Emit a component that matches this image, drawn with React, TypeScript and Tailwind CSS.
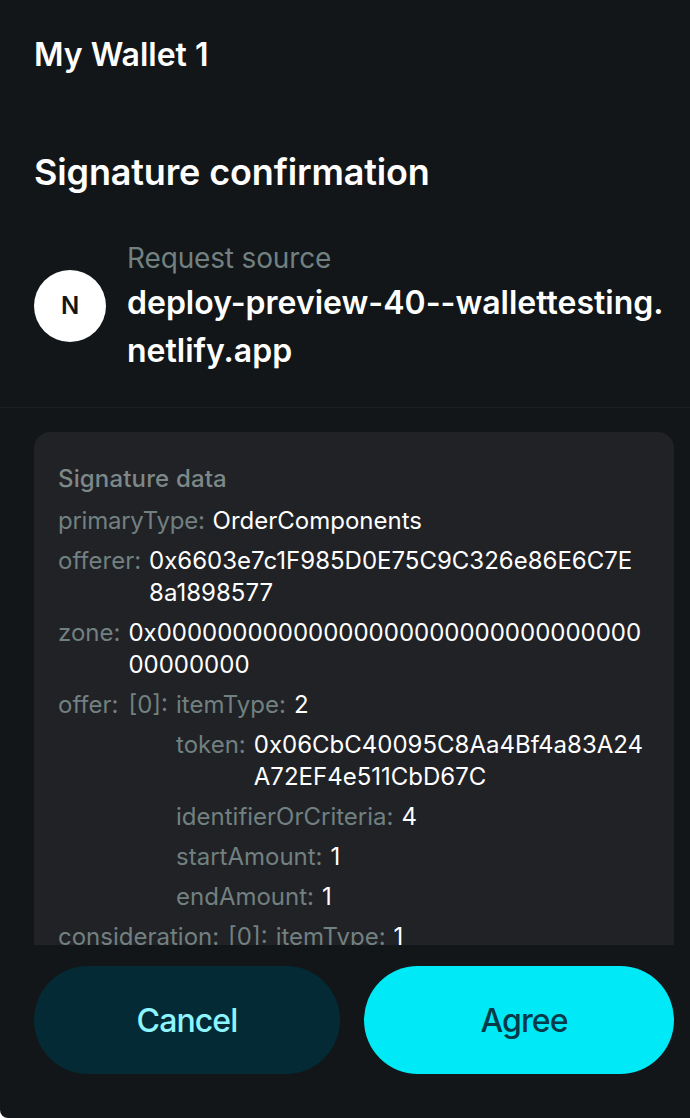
const muted = "text-[#718080]";

function Row({ label, children, labelClass = "" }: { label: string; children: React.ReactNode; labelClass?: string }) {
  return (
    <div className="flex gap-2">
      <span className={`shrink-0 ${muted} ${labelClass}`}>{label}</span>
      <div className="min-w-0 flex-1 break-all text-white">{children}</div>
    </div>
  );
}

export default function App() {
  return (
    <div className="flex h-[1118px] w-[690px] flex-col overflow-hidden rounded-bl-[8px] bg-[#121618] font-['Inter',sans-serif] text-white">
      <header className="pt-[36px] pr-[16px] pl-[34px]">
        <h1 className="text-[32px] leading-[38px] font-semibold">My Wallet 1</h1>
      </header>

      <div className="border-b border-[#1c2224] pt-[76px] pr-[16px] pb-[32px] pl-[34px]">
        <h2 className="text-[36px] leading-[44px] font-semibold tracking-[-0.15px]">Signature confirmation</h2>
        <div className="mt-[43px] flex items-center gap-[21px]">
          <div className="flex h-[72px] w-[72px] shrink-0 items-center justify-center rounded-full bg-white text-[24px] font-semibold text-[#121618]">
            N
          </div>
          <div className="min-w-0 flex-1">
            <div className={`text-[28px] leading-[42px] tracking-[-0.15px] ${muted}`}>Request source</div>
            <div className="text-[32px] leading-[48px] font-semibold">
              deploy-preview-40--wallettesting.
              <wbr />
              netlify.app
            </div>
          </div>
        </div>
      </div>

      <main className="flex min-h-0 flex-1 flex-col pt-[24px] pr-[16px] pl-[34px]">
        <div className="h-[513px] overflow-hidden rounded-t-[16px] bg-[#212226] pt-[31px] pr-[30px] pl-[24px] text-[24px] leading-[32px]">
          <div className="mb-[10px] font-medium tracking-[0.15px] text-[#7d8888]">Signature data</div>
          <div className="flex flex-col gap-[8px]">
            <Row label="primaryType:" labelClass="tracking-[-0.25px]">
              OrderComponents
            </Row>
            <Row label="offerer:">0x6603e7c1F985D0E75C9C326e86E6C7E8a1898577</Row>
            <Row label="zone:">0x0000000000000000000000000000000000000000</Row>
            <Row label="offer:">
              <div className="pl-[2px]">
                <Row label="[0]:">
                  <div className="flex flex-col gap-[8px]">
                    <Row label="itemType:">2</Row>
                    <Row label="token:">0x06CbC40095C8Aa4Bf4a83A24A72EF4e511CbD67C</Row>
                    <Row label="identifierOrCriteria:">4</Row>
                    <Row label="startAmount:">1</Row>
                    <Row label="endAmount:">1</Row>
                  </div>
                </Row>
              </div>
            </Row>
            <Row label="consideration:">
              <div className="pl-[1px]">
                <Row label="[0]:">
                  <Row label="itemType:">1</Row>
                </Row>
              </div>
            </Row>
          </div>
        </div>

        <div className="mt-[21px] flex gap-[24px]">
          <button className="h-[108px] w-[306px] rounded-full bg-[#042b35] pt-[2px] text-[32px] font-medium tracking-[-0.9px] text-[#8ef5ff]">
            Cancel
          </button>
          <button className="h-[108px] w-[310px] rounded-full bg-[#00e9f6] pt-[2px] pl-[10px] text-[32px] font-medium tracking-[-0.9px] text-[#053a49]">
            Agree
          </button>
        </div>
      </main>
    </div>
  );
}
